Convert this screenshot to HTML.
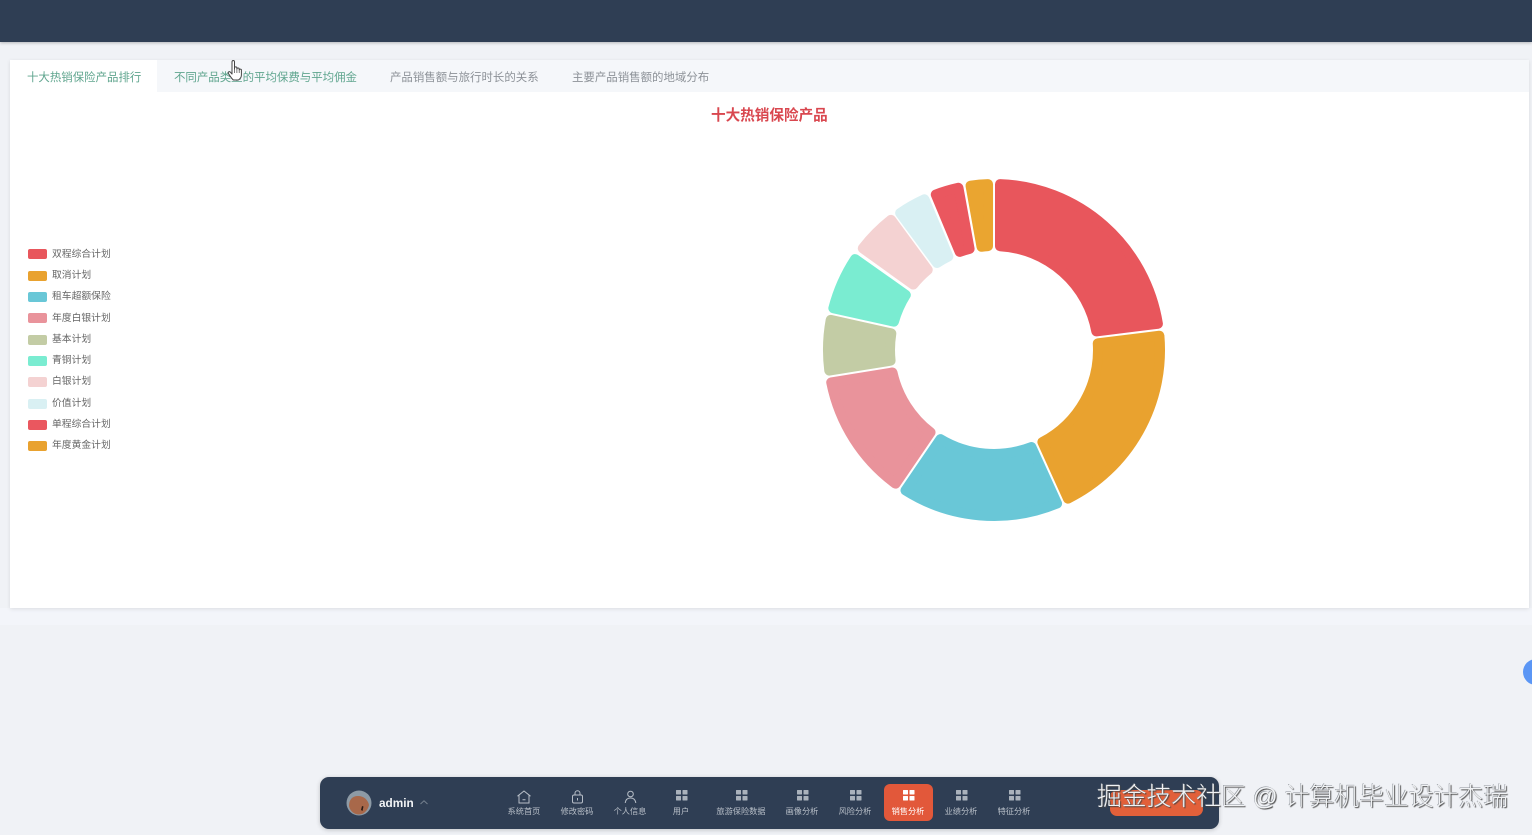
<!DOCTYPE html>
<html lang="zh">
<head>
<meta charset="utf-8">
<title>销售分析</title>
<style>
html,body{margin:0;padding:0;width:1532px;height:835px;overflow:hidden;background:#f0f2f6;font-family:"Liberation Sans","Noto Sans CJK SC",sans-serif;}
.a{position:absolute;white-space:nowrap;}
#top{left:0;top:0;width:1532px;height:42px;background:#2f3e54;box-shadow:0 1px 3px rgba(0,0,0,.25);}
#band{left:0;top:608px;width:1532px;height:17px;background:#f3f5fa;}
#card{left:10px;top:60px;width:1519px;height:548px;background:#fff;box-shadow:0 1px 4px rgba(0,0,0,.1);}
#tabs{left:10px;top:60px;width:1519px;height:32px;background:#f5f7fa;}
#tab0{left:10px;top:60px;width:147px;height:32px;background:#fff;}
.t{top:69px;padding-top:1px;font-size:11.45px;line-height:16px;color:#8d9298;}
.t.g{color:#5fa58e;}
#title{left:711px;top:105px;padding-top:1px;font-size:14.6px;line-height:20px;font-weight:bold;color:#d9474f;}
.sw{position:absolute;left:28px;width:19px;height:10px;border-radius:2px;}
.lt{position:absolute;left:52px;font-size:9.8px;line-height:12px;color:#666;white-space:nowrap;}
#bar{left:320px;top:777px;width:899px;height:52px;border-radius:9px;background:#2f3e54;box-shadow:0 1px 5px rgba(0,0,0,.2);}
#act{left:884px;top:784px;width:49px;height:37px;border-radius:6px;background:#e2583a;}
#btn{left:1110px;top:790px;width:93px;height:26px;border-radius:7px;background:#e2603a;}
.lb{position:absolute;top:806px;width:70px;text-align:center;font-size:8.2px;line-height:11px;color:#b8bfc8;}
.ic{position:absolute;top:790px;}
#admin{left:379px;top:796px;font-size:11.8px;line-height:14px;font-weight:bold;color:#f2f4f6;}
#wm{left:1097px;top:779px;font-family:"Liberation Sans","Noto Sans CJK SC",sans-serif;font-size:24.8px;line-height:38px;color:#f1f3f5;text-shadow:1px 1px 1px #444,-0.5px -0.5px 0 #8a8f96;font-weight:300;}
#dot{left:1523px;top:659px;width:26px;height:26px;border-radius:50%;background:#5b96f5;}
</style>
</head>
<body>
<div class="a" id="top"></div>
<div class="a" id="band"></div>
<div class="a" id="card"></div>
<div class="a" id="tabs"></div>
<div class="a" id="tab0"></div>
<div class="a t g" style="left:27px">十大热销保险产品排行</div>
<div class="a t g" style="left:174px">不同产品类型的平均保费与平均佣金</div>
<div class="a t" style="left:390px">产品销售额与旅行时长的关系</div>
<div class="a t" style="left:572px">主要产品销售额的地域分布</div>
<div class="a" id="title">十大热销保险产品</div>

<svg class="a" style="left:224px;top:59px" width="22" height="24" viewBox="0 0 22 24">
<path d="M8 3c0-2 2.500-2 2.500 0v7l0-1c0-1.500 2.400-1.500 2.400 0v1c0-1.400 2.300-1.400 2.300 0v1c0-1.200 2.200-1.200 2.200 0v5c0 2.500-1.400 4-3 5h-5c-1.500-1-3-3.500-5-6.500-.8-1.300.8-2.500 2-1.300l1.600 1.800z" fill="#fff" stroke="#444" stroke-width="1" stroke-linejoin="round"/>
<path d="M10.500 10v4M12.900 10v4M15.200 11v3" stroke="#444" stroke-width=".7"/>
</svg>

<div class="sw" style="top:249px;background:#e8565c"></div><div class="lt" style="top:248px;padding-top:1px">双程综合计划</div>
<div class="sw" style="top:271px;background:#e9a22f"></div><div class="lt" style="top:270px">取消计划</div>
<div class="sw" style="top:292px;background:#69c7d7"></div><div class="lt" style="top:291px">租车超额保险</div>
<div class="sw" style="top:313px;background:#e9939b"></div><div class="lt" style="top:313px">年度白银计划</div>
<div class="sw" style="top:335px;background:#c3cca5"></div><div class="lt" style="top:334px">基本计划</div>
<div class="sw" style="top:356px;background:#7aecd1"></div><div class="lt" style="top:355px">青铜计划</div>
<div class="sw" style="top:377px;background:#f4d2d2"></div><div class="lt" style="top:376px">白银计划</div>
<div class="sw" style="top:399px;background:#d9f0f3"></div><div class="lt" style="top:398px">价值计划</div>
<div class="sw" style="top:420px;background:#ea575f"></div><div class="lt" style="top:419px">单程综合计划</div>
<div class="sw" style="top:441px;background:#e9a22f"></div><div class="lt" style="top:440px">年度黄金计划</div>

<svg class="a" style="left:0;top:0" width="1532" height="835" viewBox="0 0 1532 835">
<g transform="translate(994 350)" stroke-width="10" stroke-linejoin="round">
<path transform="rotate(0)" fill="#e8565c" stroke="#e8565c" d="M6-165.900A166 166 0 0 1 163.900-26.200L102.300-18.600A104 104 0 0 0 6-103.800Z"/>
<path transform="rotate(83)" fill="#e9a22f" stroke="#e9a22f" d="M6-165.900A166 166 0 0 1 156.500-55.300L97.300-36.800A104 104 0 0 0 6-103.800Z"/>
<path transform="rotate(155.600)" fill="#69c7d7" stroke="#69c7d7" d="M6-165.900A166 166 0 0 1 138.600-91.300L85.600-59.100A104 104 0 0 0 6-103.800Z"/>
<path transform="rotate(214.300)" fill="#e9939b" stroke="#e9939b" d="M6-165.900A166 166 0 0 1 116.200-118.500L71.200-75.800A104 104 0 0 0 6-103.800Z"/>
<path transform="rotate(260.800)" fill="#c3cca5" stroke="#c3cca5" d="M6-165.900A166 166 0 0 1 55.800-156.400L32.800-98.700A104 104 0 0 0 6-103.800Z"/>
<path transform="rotate(282.500)" fill="#7aecd1" stroke="#7aecd1" d="M6-165.900A166 166 0 0 1 58.700-155.300L34.700-98A104 104 0 0 0 6-103.800Z"/>
<path transform="rotate(305.700)" fill="#f4d2d2" stroke="#f4d2d2" d="M6-165.900A166 166 0 0 1 45.600-159.600L26.400-100.600A104 104 0 0 0 6-103.800Z"/>
<path transform="rotate(323.500)" fill="#d9f0f3" stroke="#d9f0f3" d="M6-165.900A166 166 0 0 1 33.700-162.500L18.900-102.300A104 104 0 0 0 6-103.800Z"/>
<path transform="rotate(337.400)" fill="#ea575f" stroke="#ea575f" d="M6-165.900A166 166 0 0 1 29.500-163.400L16.300-102.700A104 104 0 0 0 6-103.800Z"/>
<path transform="rotate(349.800)" fill="#eaa530" stroke="#eaa530" d="M6-165.900A166 166 0 0 1 23.500-164.300L12.500-103.300A104 104 0 0 0 6-103.800Z"/>
</g>
</svg>

<div class="a" id="dot"></div>
<div class="a" id="bar"></div>
<div class="a" id="act"></div>
<div class="a" id="btn"></div>

<svg class="a" style="left:346px;top:790px" width="26" height="26" viewBox="0 0 26 26">
<circle cx="13" cy="13" r="12.500" fill="#8d9aa5"/>
<path d="M3 16c0-6 3-10 9-10s10 4 11 9c-1 5-5 9.500-10 9.500-5 0-9-3.500-10-8.500z" fill="#a8684a"/>
<path d="M15 20l1-4 1.500.5-1 4.500z" fill="#2a1c16"/>
</svg>
<div class="a" id="admin">admin</div>
<svg class="a" style="left:419px;top:799px" width="10" height="7" viewBox="0 0 10 7"><path d="M1.500 5L5 1.800 8.500 5" fill="none" stroke="#76818f" stroke-width="1"/></svg>

<svg class="ic" style="left:516px" width="16" height="14" viewBox="0 0 16 14"><path d="M1.500 6.200L8 1l6.500 5.200M3 5v8h10V5M6.500 9.800h3" fill="none" stroke="#b8bfc8" stroke-width="1"/></svg>
<svg class="ic" style="left:571px" width="13" height="14" viewBox="0 0 13 14"><rect x="1.500" y="5" width="10" height="8" rx="1.500" fill="none" stroke="#b8bfc8"/><path d="M4 5V3.300a2.500 2.500 0 0 1 5 0V5M6.500 8v2.500" fill="none" stroke="#b8bfc8"/></svg>
<svg class="ic" style="left:624px" width="13" height="14" viewBox="0 0 13 14"><circle cx="6.500" cy="4" r="2.800" fill="none" stroke="#b8bfc8"/><path d="M1.200 13c.4-3.500 2.500-5 5.300-5s4.900 1.500 5.300 5" fill="none" stroke="#b8bfc8"/></svg>

<svg width="0" height="0" style="position:absolute"><defs><g id="grid"><rect x="0" y="0" width="5" height="4.500" rx=".5"/><rect x="6.500" y="0" width="5" height="4.500" rx=".5"/><rect x="0" y="6" width="5" height="4.500" rx=".5"/><rect x="6.500" y="6" width="5" height="4.500" rx=".5"/></g></defs></svg>
<svg class="ic" style="left:676px" width="12" height="11" fill="#aab2bc"><use href="#grid"/></svg>
<svg class="ic" style="left:736px" width="12" height="11" fill="#aab2bc"><use href="#grid"/></svg>
<svg class="ic" style="left:797px" width="12" height="11" fill="#aab2bc"><use href="#grid"/></svg>
<svg class="ic" style="left:850px" width="12" height="11" fill="#aab2bc"><use href="#grid"/></svg>
<svg class="ic" style="left:903px" width="12" height="11" fill="#ffffff"><use href="#grid"/></svg>
<svg class="ic" style="left:956px" width="12" height="11" fill="#aab2bc"><use href="#grid"/></svg>
<svg class="ic" style="left:1009px" width="12" height="11" fill="#aab2bc"><use href="#grid"/></svg>

<div class="lb" style="left:489px">系统首页</div>
<div class="lb" style="left:542px">修改密码</div>
<div class="lb" style="left:595px">个人信息</div>
<div class="lb" style="left:646px">用户</div>
<div class="lb" style="left:706px">旅游保险数据</div>
<div class="lb" style="left:767px">画像分析</div>
<div class="lb" style="left:820px">风险分析</div>
<div class="lb" style="left:873px;color:#fff">销售分析</div>
<div class="lb" style="left:926px">业绩分析</div>
<div class="lb" style="left:979px">特征分析</div>

<div class="a" id="wm">掘金技术社区 @ 计算机毕业设计杰瑞</div>
</body>
</html>
